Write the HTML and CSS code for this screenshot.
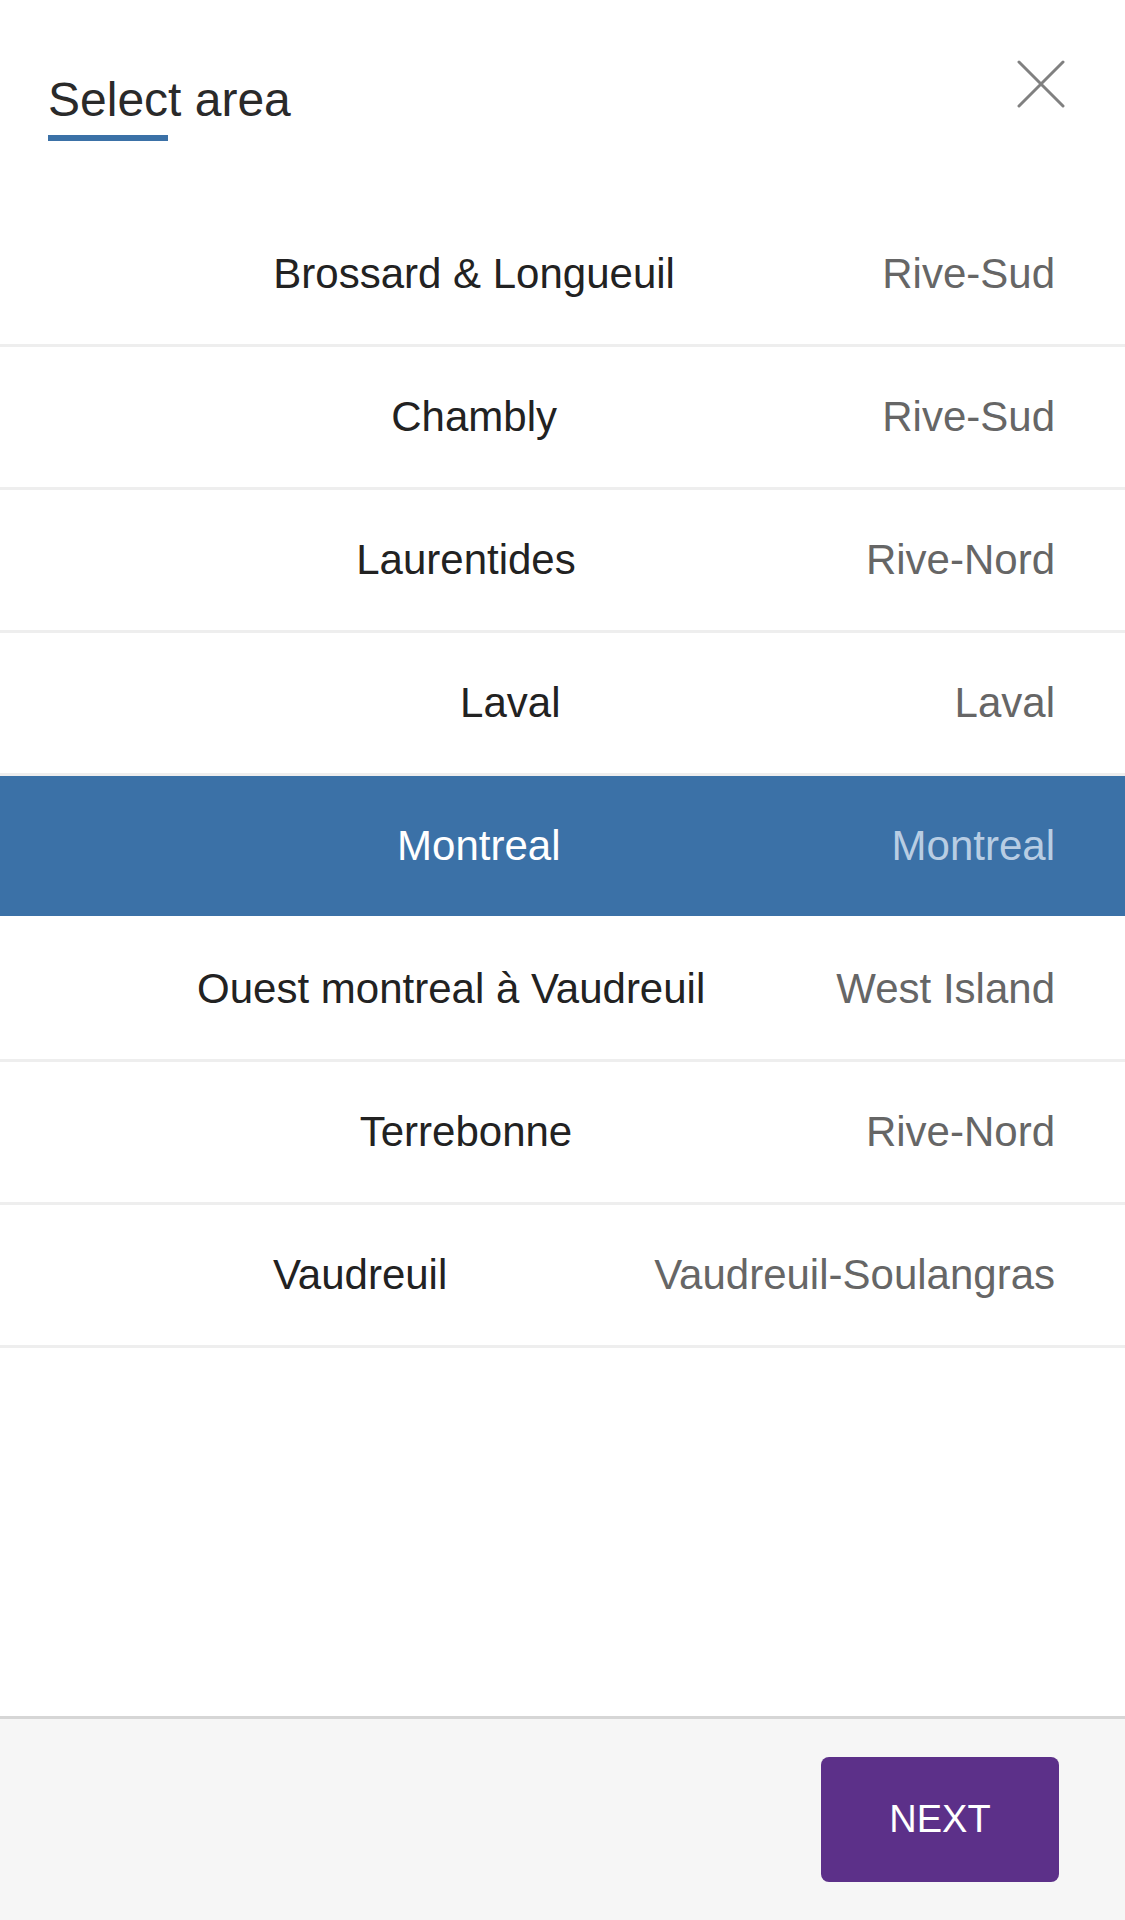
FILE: index.html
```html
<!DOCTYPE html>
<html lang="en">
<head>
    <meta charset="UTF-8">
    <meta name="viewport" content="width=device-width, initial-scale=1.0">
    <title>Select area</title>
    <link rel="stylesheet" href="styles.css">
</head>
<body>
    <div class="sheet">
        <header class="sheet-header">
            <div class="title-block">
                <h1 class="title">Select area</h1>
                <div class="title-bar"></div>
            </div>
            <button class="close" aria-label="Close">
                <svg width="48" height="48" viewBox="0 0 48 48">
                    <path d="M2 2 L46 46 M46 2 L2 46" stroke="#808080" stroke-width="3" stroke-linecap="round" fill="none"/>
                </svg>
            </button>
        </header>

        <ul class="area-list">
            <li class="area"><span class="area-name">Brossard &amp; Longueuil</span><span class="area-region">Rive-Sud</span></li>
            <li class="area"><span class="area-name">Chambly</span><span class="area-region">Rive-Sud</span></li>
            <li class="area"><span class="area-name">Laurentides</span><span class="area-region">Rive-Nord</span></li>
            <li class="area"><span class="area-name">Laval</span><span class="area-region">Laval</span></li>
            <li class="area selected"><span class="area-name">Montreal</span><span class="area-region">Montreal</span></li>
            <li class="area"><span class="area-name">Ouest montreal à Vaudreuil</span><span class="area-region">West Island</span></li>
            <li class="area"><span class="area-name">Terrebonne</span><span class="area-region">Rive-Nord</span></li>
            <li class="area"><span class="area-name">Vaudreuil</span><span class="area-region">Vaudreuil-Soulangras</span></li>
        </ul>

        <footer class="sheet-footer">
            <button class="btn-next">NEXT</button>
        </footer>
    </div>
</body>
</html>
```

FILE: styles.css
```css
:root {
    --blue: #3b71a7;
    --purple: #5c3089;
    --text: #222222;
    --muted: #666666;
    --line: #eeeeee;
}

* {
    margin: 0;
    padding: 0;
    box-sizing: border-box;
    font-family: 'Liberation Sans', Arial, Helvetica, sans-serif;
}

body {
    background: #ffffff;
    color: var(--text);
}

.sheet {
    min-height: 100vh;
    display: flex;
    flex-direction: column;
}

.sheet-header {
    display: flex;
    justify-content: space-between;
    align-items: flex-start;
    padding: 60px 60px 63px 48px;
}

.title-block {
    margin-top: 16px;
}

.title {
    font-size: 48px;
    line-height: 48px;
    font-weight: normal;
    color: #2a2a2a;
}

.title-bar {
    width: 120px;
    height: 6px;
    margin-top: 11px;
    background: var(--blue);
}

.close {
    width: 48px;
    height: 48px;
    border: none;
    background: transparent;
    cursor: pointer;
}

.close svg {
    display: block;
}

.area-list {
    list-style: none;
}

.area {
    height: 143px;
    display: flex;
    align-items: center;
    gap: 4px;
    padding: 0 70px;
    border-bottom: 3px solid var(--line);
    font-size: 42px;
    cursor: pointer;
}

.area-name {
    flex: 1;
    text-align: center;
    color: var(--text);
}

.area-region {
    color: var(--muted);
    white-space: nowrap;
}

.area.selected {
    background: var(--blue);
    border-bottom-color: #ffffff;
}

.area.selected .area-name {
    color: #ffffff;
}

.area.selected .area-region {
    color: #b8cde3;
}

.sheet-footer {
    margin-top: auto;
    display: flex;
    justify-content: flex-end;
    padding: 38px 66px;
    background: #f6f6f6;
    border-top: 3px solid #d6d6d6;
}

.btn-next {
    width: 238px;
    height: 125px;
    border: none;
    border-radius: 8px;
    background: var(--purple);
    color: #ffffff;
    font-size: 38px;
    cursor: pointer;
}
```
